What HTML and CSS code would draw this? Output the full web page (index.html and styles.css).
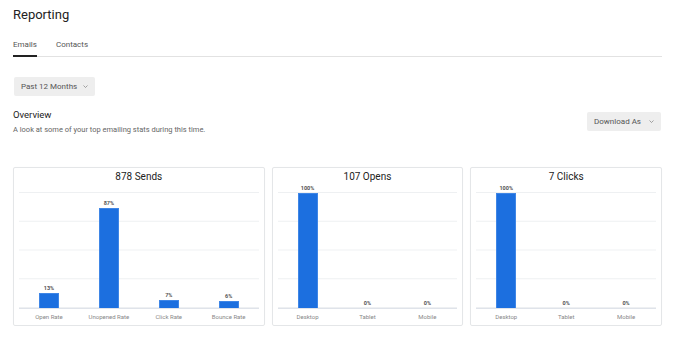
FILE: index.html
```html
<!DOCTYPE html>
<html>
<head>
<meta charset="utf-8">
<link rel="stylesheet" href="styles.css">
</head>
<body>
<div class="page">
  <h1 class="title">Reporting</h1>
  <div class="tabs">
    <div class="tab active">Emails</div>
    <div class="tab">Contacts</div>
  </div>
  <button class="select range">Past 12 Months <svg class="chev" viewBox="0 0 10 6" width="5" height="3"><path d="M1 1l4 4 4-4" fill="none" stroke="#777" stroke-width="1.3"/></svg></button>
  <div class="overview">
    <div class="ov-text">
      <div class="ov-title">Overview</div>
      <div class="ov-sub">A look at some of your top emailing stats during this time.</div>
    </div>
    <button class="select download">Download As <svg class="chev" viewBox="0 0 10 6" width="5" height="3"><path d="M1 1l4 4 4-4" fill="none" stroke="#777" stroke-width="1.3"/></svg></button>
  </div>
  <div class="cards">
    <div class="card c4">
      <div class="card-title">878 Sends</div>
      <div class="plot">
        <div class="col"><span class="val">13%</span><span class="bar" style="height:15px"></span></div>
        <div class="col"><span class="val">87%</span><span class="bar" style="height:100px"></span></div>
        <div class="col"><span class="val">7%</span><span class="bar" style="height:8px"></span></div>
        <div class="col"><span class="val">6%</span><span class="bar" style="height:7px"></span></div>
      </div>
      <div class="cats"><span>Open Rate</span><span>Unopened Rate</span><span>Click Rate</span><span>Bounce Rate</span></div>
    </div>
    <div class="card c3">
      <div class="card-title">107 Opens</div>
      <div class="plot">
        <div class="col"><span class="val">100%</span><span class="bar" style="height:115px"></span></div>
        <div class="col"><span class="val">0%</span><span class="bar empty"></span></div>
        <div class="col"><span class="val">0%</span><span class="bar empty"></span></div>
      </div>
      <div class="cats"><span>Desktop</span><span>Tablet</span><span>Mobile</span></div>
    </div>
    <div class="card c3">
      <div class="card-title">7 Clicks</div>
      <div class="plot">
        <div class="col"><span class="val">100%</span><span class="bar" style="height:115px"></span></div>
        <div class="col"><span class="val">0%</span><span class="bar empty"></span></div>
        <div class="col"><span class="val">0%</span><span class="bar empty"></span></div>
      </div>
      <div class="cats"><span>Desktop</span><span>Tablet</span><span>Mobile</span></div>
    </div>
  </div>
</div>
</body>
</html>
```

FILE: styles.css
```css
* { box-sizing: border-box; }
html, body { margin: 0; background: #fff; }
body { font-family: Roboto, "Liberation Sans", Arial, sans-serif; color: #222; }
.page { padding: 0 16px 0 13px; }
.title { margin: 0; padding-top: 7px; font-size: 13px; line-height: 16px; font-weight: 400; color: #222; }
.tabs { display: flex; gap: 19px; margin-top: 14px; border-bottom: 1px solid #e2e2e2; }
.tab { font-size: 8px; line-height: 11px; padding: 2px 0 5px; color: #555; margin-bottom: -1px; border-bottom: 2px solid transparent; }
.tab.active { border-bottom-color: #222; }
.select { display: flex; align-items: center; gap: 6px; white-space: nowrap; border: 0; border-radius: 2px; background: #eeeeee; font-family: inherit; font-size: 8px; color: #555; height: 19px; padding: 0 7px; cursor: pointer; }
.chev { display: block; flex-shrink: 0; }
.range { margin-top: 20px; margin-left: 1px; }
.overview { display: flex; justify-content: space-between; align-items: flex-start; margin-top: 13px; }
.ov-title { font-size: 9.5px; line-height: 12px; color: #222; }
.ov-sub { margin-top: 4px; font-size: 7.5px; line-height: 10px; color: #666; }
.download { margin-top: 3px; margin-right: 1px; gap: 8px; }
.cards { display: flex; gap: 7px; margin-top: 32px; }
.card { border: 1px solid #e4e6e8; border-radius: 2px; height: 159px; padding: 3px 5px 0 5px; box-shadow: 0 0 1px rgba(0,0,0,0.04); }
.c4 { flex: 4 1 0; }
.c3 { flex: 3 1 0; }
.card-title { text-align: center; font-size: 10px; line-height: 12px; color: #222; height: 21px; }
.plot { display: flex; height: 117px; border-top: 1px solid #eef0f2; border-bottom: 1px solid #dfe3ea;
  background-image: linear-gradient(#eef0f2 1px, transparent 1px); background-size: 100% 28.75px; background-position: 0 -1px; }
.col { flex: 1 1 0; display: flex; flex-direction: column; align-items: center; justify-content: flex-end; }
.val { flex-shrink: 0; font-size: 5.5px; line-height: 6px; font-weight: 700; color: #555; margin-bottom: 2px; }
.bar { flex-shrink: 0; display: block; width: 20px; background: #1c6fdf; border: 1px solid #3f86e6; border-bottom: 0; }
.bar.empty { height: 0; border: 0; }
.cats { display: flex; margin-top: 4px; }
.cats span { flex: 1 1 0; text-align: center; font-size: 6px; line-height: 8px; color: #888; }
```
